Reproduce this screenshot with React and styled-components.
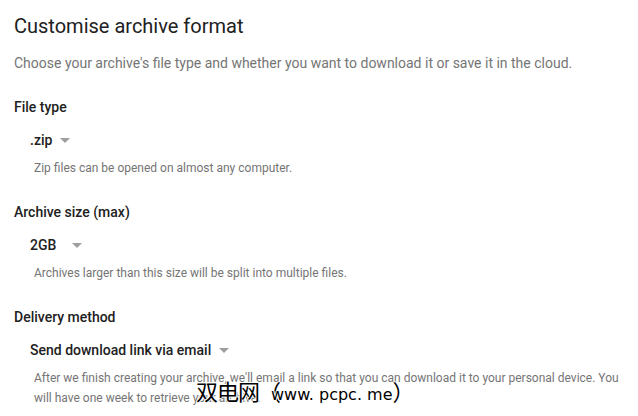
import React from 'react';
import styled, { createGlobalStyle } from 'styled-components';

const GlobalStyle = createGlobalStyle`
    html, body {
        margin: 0;
        padding: 0;
        background: #fff;
    }
    body {
        font-family: Roboto, 'Liberation Sans', Arial, sans-serif;
        -webkit-font-smoothing: antialiased;
    }
`;

const Page = styled.div`
    position: relative;
    width: 638px;
    height: 416px;
    overflow: hidden;
    padding: 10px 0 0 14px;
    box-sizing: border-box;
`;

const Title = styled.h1`
    margin: 0;
    font-size: 20px;
    line-height: 32px;
    font-weight: 400;
    color: #212121;
`;

const Intro = styled.p`
    margin: 11px 0 0;
    font-size: 14px;
    line-height: 20px;
    color: #757575;
`;

const Section = styled.section`
    margin-top: 24px;
`;

const Heading = styled.h2`
    margin: 0;
    font-size: 14px;
    line-height: 20px;
    font-weight: 500;
    color: #212121;
`;

const Select = styled.div`
    display: flex;
    align-items: center;
    gap: 8px;
    margin: 13px 0 0 16px;
    height: 20px;
    cursor: pointer;
`;

const SelectLabel = styled.span`
    min-width: ${(props) => props.minWidth || 0}px;
    font-size: 14px;
    line-height: 20px;
    font-weight: 500;
    color: #212121;
`;

const Caret = styled.span`
    width: 0;
    height: 0;
    border-left: 5px solid transparent;
    border-right: 5px solid transparent;
    border-top: 5px solid #9e9e9e;
    margin-top: 1px;
`;

const Hint = styled.p`
    margin: 8px 0 0 20px;
    max-width: 590px;
    font-size: 12px;
    line-height: 20px;
    color: #757575;
`;

const Watermark = styled.div`
    position: absolute;
    left: 196px;
    top: 376px;
    display: flex;
    align-items: baseline;
    color: #000;
    white-space: nowrap;
    text-shadow: 1px 0 #fff, -1px 0 #fff, 0 1px #fff, 0 -1px #fff;
`;

const MarkCjk = styled.span`
    font-family: 'Noto Sans CJK SC', sans-serif;
    font-size: 22px;
    line-height: 28px;
    letter-spacing: -1px;
`;

const MarkLatin = styled.span`
    margin-left: -9px;
    font-family: 'DejaVu Sans', sans-serif;
    font-size: 16px;
`;

const sections = [
    {
        heading: 'File type',
        value: '.zip',
        minWidth: 0,
        hint: 'Zip files can be opened on almost any computer.',
    },
    {
        heading: 'Archive size (max)',
        value: '2GB',
        minWidth: 34,
        hint: 'Archives larger than this size will be split into multiple files.',
    },
    {
        heading: 'Delivery method',
        value: 'Send download link via email',
        minWidth: 0,
        hint: "After we finish creating your archive, we'll email a link so that you can download it to your personal device. You will have one week to retrieve your archive.",
    },
];

const App = () => {
    return (
        <>
            <GlobalStyle />
            <Page>
                <Title>Customise archive format</Title>
                <Intro>
                    Choose your archive's file type and whether you want to download it or save it in the cloud.
                </Intro>
                {sections.map((s) => (
                    <Section key={s.heading}>
                        <Heading>{s.heading}</Heading>
                        <Select>
                            <SelectLabel minWidth={s.minWidth}>{s.value}</SelectLabel>
                            <Caret />
                        </Select>
                        <Hint>{s.hint}</Hint>
                    </Section>
                ))}
                <Watermark>
                    <MarkCjk>双电网（</MarkCjk>
                    <MarkLatin>www. pcpc. me</MarkLatin>
                    <MarkCjk>）</MarkCjk>
                </Watermark>
            </Page>
        </>
    );
};

export default App;
